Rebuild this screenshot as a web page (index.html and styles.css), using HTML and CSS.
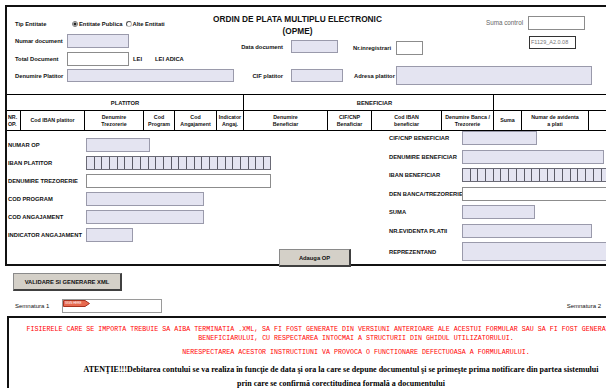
FILE: index.html
```html
<!DOCTYPE html>
<html lang="ro">
<head>
<meta charset="utf-8">
<title>OPME</title>
<link rel="stylesheet" href="styles.css">
</head>
<body>
<div class="page">
  <div class="box main">
    <div class="head">
      <div class="row-a">
        <div class="tip">
          <span class="lbl tip-l">Tip Entitate</span>
          <span class="radio on"></span><span class="lbl">Entitate Publica</span>
          <span class="radio r2"></span><span class="lbl">Alte Entitati</span>
        </div>
        <div class="title">ORDIN DE PLATA MULTIPLU ELECTRONIC<br>(OPME)</div>
        <div class="suma-ctl">
          <span class="lbl lbl-g">Suma control</span>
          <span class="fld white w57"></span>
        </div>
      </div>
      <div class="row-b">
        <div class="col-left">
          <div class="frow"><span class="lbl">Numar document</span><span class="fld w62"></span></div>
          <div class="frow r-total"><span class="lbl">Total Document</span><span class="fld white w62"></span><span class="lbl lei">LEI</span><span class="lbl lei2">LEI ADICA</span></div>
          <div class="frow r-den"><span class="lbl">Denumire Platitor</span><span class="fld h13 w167"></span></div>
        </div>
        <div class="col-mid">
          <div class="frow r-data"><span class="lbl">Data document</span><span class="fld h13 w47"></span></div>
          <div class="frow r-cif"><span class="lbl">CIF platitor</span><span class="fld h13 w52"></span></div>
        </div>
        <div class="col-right">
          <div class="frow r-nr">
            <span class="lbl nr-l">Nr.inregistrari</span><span class="fld white w27 nr-f"></span>
            <span class="ver">F1129_A2.0.08</span>
          </div>
          <div class="frow r-adr"><span class="lbl adr-l">Adresa platitor</span><span class="fld h19 w196"></span></div>
        </div>
      </div>
    </div>

    <div class="thead">
      <div class="tr1">
        <div>PLATITOR</div>
        <div class="ben">BENEFICIAR</div>
        <div></div>
      </div>
      <div class="tr2">
        <div class="nrop">NR.<br>OP.</div>
        <div>Cod IBAN platitor</div>
        <div>Denumire<br>Trezorerie</div>
        <div>Cod<br>Program</div>
        <div>Cod<br>Angajament</div>
        <div>Indicator<br>Angaj.</div>
        <div>Denumire<br>Beneficiar</div>
        <div>CIF/CNP<br>Benaficiar</div>
        <div>Cod IBAN<br>beneficiar</div>
        <div>Denumire Banca /<br>Trezorerie</div>
        <div>Suma</div>
        <div>Numar de avidenta<br>a plati</div>
        <div></div>
      </div>
    </div>

    <div class="entry">
      <div class="ecol-l">
        <div class="frow"><span class="lbl">NUMAR OP</span><span class="fld w64"></span></div>
        <div class="frow"><span class="lbl">IBAN PLATITOR</span><span class="fld seg w185"></span></div>
        <div class="frow"><span class="lbl">DENUMIRE TREZORERIE</span><span class="fld white w185"></span></div>
        <div class="frow"><span class="lbl">COD PROGRAM</span><span class="fld w118"></span></div>
        <div class="frow"><span class="lbl">COD ANGAJAMENT</span><span class="fld w118"></span></div>
        <div class="frow"><span class="lbl">INDICATOR ANGAJAMENT</span><span class="fld w47"></span></div>
      </div>
      <div class="btn btn-add">Adauga OP</div>
      <div class="ecol-r">
        <div class="frow"><span class="lbl">CIF/CNP BENEFICIAR</span><span class="fld w75"></span></div>
        <div class="frow"><span class="lbl">DENUMIRE BENEFICIAR</span><span class="fld w142"></span></div>
        <div class="frow"><span class="lbl">IBAN BENEFICIAR</span><span class="fld seg w200"></span></div>
        <div class="frow"><span class="lbl">DEN BANCA/TREZORERIE</span><span class="fld white w200"></span></div>
        <div class="frow"><span class="lbl">SUMA</span><span class="fld w73"></span></div>
        <div class="frow"><span class="lbl">NR.EVIDENTA PLATII</span><span class="fld w130"></span></div>
        <div class="frow"><span class="lbl">REPREZENTAND</span><span class="fld h19 w200"></span></div>
      </div>
    </div>
  </div>

  <div class="actions">
    <div class="btn btn-val">VALIDARE SI GENERARE XML</div>
  </div>

  <div class="sign">
    <span class="sig-l">Semnatura 1</span>
    <span class="sig-f">
      <span class="tag"><svg width="27" height="7" viewBox="0 0 27 7"><polygon points="0.5,0.5 22,0.5 26.5,3.5 22,6.5 0.5,6.5" fill="#e7694f" stroke="#a8321f" stroke-width="1"/></svg><span class="tag-t">SIGN HERE</span></span>
    </span>
    <span class="sig-l sig2">Semnatura 2</span>
  </div>

  <div class="box notes">
    <p class="red red1">FISIERELE CARE SE IMPORTA TREBUIE SA AIBA TERMINATIA .XML, SA FI FOST GENERATE DIN VERSIUNI ANTERIOARE ALE ACESTUI FORMULAR SAU SA FI FOST GENERATE CU PROGRAMELE ALE<br>BENEFICIARULUI, CU RESPECTAREA INTOCMAI A STRUCTURII DIN GHIDUL UTILIZATORULUI.</p>
    <p class="red red2">NERESPECTAREA ACESTOR INSTRUCTIUNI VA PROVOCA O FUNCTIONARE DEFECTUOASA A FORMULARULUI.</p>
    <p class="warn">ATENŢIE!!!Debitarea contului se va realiza în funcţie de data şi ora la care se depune documentul şi se primeşte prima notificare din partea sistemului<br>prin care se confirmă corectitudinea formală a documentului</p>
  </div>
</div>
</body>
</html>
```

FILE: styles.css
```css
* { box-sizing: border-box; }
html, body { margin: 0; padding: 0; background: #fff; overflow: hidden; }
body { width: 606px; height: 388px; }

.page {
  width: 720px;
  padding: 5px 0 0 5px;
  font-family: "Liberation Sans", Arial, sans-serif;
  color: #111;
}

.lbl {
  font-size: 5.8px;
  font-weight: bold;
  line-height: 8px;
  white-space: nowrap;
  flex: none;
}

.fld {
  display: block;
  flex: none;
  height: 14px;
  background: #e4e4f1;
  border: 1px solid #9a9aab;
}
.fld.white { background: #fff; border-color: #8c8c8c; }
.fld.h13 { height: 13px; }
.fld.h19 { height: 19px; }
.fld.seg {
  background-color: #e4e4f1;
  background-image: repeating-linear-gradient(to right, transparent 0 6.7px, #5a5a66 6.7px 7.7px);
  border-color: #6a6a76;
}

.w27 { width: 27px; } .w47 { width: 47px; } .w52 { width: 52px; } .w57 { width: 57px; }
.w62 { width: 62px; } .w64 { width: 64px; } .w73 { width: 73px; } .w75 { width: 75px; }
.w118 { width: 118px; } .w130 { width: 130px; } .w142 { width: 142px; } .w167 { width: 167px; }
.w185 { width: 185px; } .w196 { width: 196px; } .w200 { width: 200px; }

.box { border: 2px solid #111; }
.main { width: 700px; height: 261px; }

/* header block */
.head { height: 87px; padding-left: 8px; }
.row-a { display: flex; align-items: flex-start; height: 27px; }
.tip { display: flex; align-items: center; width: 185px; height: 8px; margin-top: 13px; }
.tip-l { width: 57px; }
.radio {
  width: 6px; height: 6px; border-radius: 50%;
  border: 1px solid #7a7a7a; background: #fff; flex: none; margin-right: 1px;
}
.radio.on { background: radial-gradient(circle, #222 0 1.3px, #fff 1.8px); }
.radio.r2 { margin-left: 3px; border-color: #555 #bbb #bbb #555; }

.title {
  width: 195px; margin-top: 6px;
  text-align: center; white-space: nowrap;
  font-size: 8.3px; line-height: 12px; font-weight: bold;
}
.suma-ctl { display: flex; align-items: flex-start; margin-left: 91px; }
.lbl-g { font-weight: normal; color: #666; font-size: 6.3px; width: 42px; margin-top: 12px; }
.suma-ctl .fld { margin-top: 9px; }

.row-b { display: flex; height: 60px; }
.frow { display: flex; align-items: center; }
.col-left { width: 224px; display: flex; flex-direction: column; }
.col-left .lbl { width: 52px; }
.r-total { margin-top: 4px; }
.r-den { margin-top: 3px; }
.lei { width: auto; margin-left: 4px; }
.col-left .lei { width: auto; }
.col-left .lei2 { width: auto; margin-left: 13px; }

.col-mid { width: 114px; display: flex; flex-direction: column; }
.col-mid .lbl { width: 52px; text-align: right; padding-right: 8px; }
.r-data { margin-top: 6px; }
.r-cif { margin-top: 16px; }

.col-right { display: flex; flex-direction: column; }
.r-nr { align-items: flex-start; margin-top: 2px; height: 21px; }
.nr-l { width: 43px; margin-top: 8px; }
.nr-f { margin-top: 5px; }
.ver {
  margin-left: 106px; width: 47px; height: 13px;
  border: 1px solid #333; color: #777;
  font-size: 5.5px; line-height: 11px; padding-left: 1px; white-space: nowrap;
}
.r-adr { margin-top: 9px; }
.adr-l { width: 43px; padding-left: 1px; }

/* table header */
.thead { border-top: 1px solid #000; }
.tr1 {
  display: grid; grid-template-columns: 237px 250px 1fr;
  height: 16px; border-bottom: 1px solid #000;
}
.tr1 > div {
  border-right: 1px solid #000;
  display: flex; align-items: center; justify-content: center;
  font-size: 5.8px; font-weight: bold;
}
.tr1 .ben { padding-left: 12px; }
.tr2 {
  display: grid;
  grid-template-columns: 14px 64px 59px 31px 42px 27px 84px 44px 70px 52px 28px 67px 1fr;
  height: 20px; border-bottom: 1px solid #000;
}
.tr2 > div {
  border-right: 1px solid #000;
  display: flex; align-items: center; justify-content: center;
  text-align: center; font-size: 5.3px; line-height: 7px; font-weight: bold;
  white-space: nowrap;
}
.tr2 .nrop { justify-content: flex-start; text-align: left; padding-left: 1px; }

/* entry area */
.entry { display: flex; height: 133px; }
.ecol-l { width: 272px; padding: 7px 0 0 1px; display: flex; flex-direction: column; gap: 4px; }
.ecol-l .lbl { width: 78px; }
.ecol-r { flex: 1; display: flex; flex-direction: column; gap: 4.5px; }
.ecol-r .lbl { width: 73px; }

.btn {
  display: flex; align-items: center; justify-content: center;
  background: #d4d0c8;
  border: 1px solid #8a8a8a; border-right: 2px solid #404040; border-bottom: 2px solid #404040;
  font-size: 5.8px; font-weight: bold; white-space: nowrap; flex: none;
}
.btn-add { width: 72px; height: 18px; align-self: flex-end; margin-bottom: -3px; margin-right: 38px; }

.actions { padding: 7px 0 0 8px; }
.btn-val { width: 109px; height: 18px; }

.sign { display: flex; align-items: center; width: 596px; height: 14px; margin-top: 8px; padding-left: 10px; }
.sig-l { font-size: 6px; width: 47px; white-space: nowrap; }
.sig2 { margin-left: auto; width: auto; }
.sig-f { position: relative; width: 100px; height: 14px; border: 1px solid #9a9a9a; background: #fff; }
.tag { position: absolute; left: 0; top: 0; width: 27px; height: 7px; }
.tag svg { display: block; }
.tag-t { position: absolute; left: 2px; top: 1px; font-size: 3px; line-height: 5px; color: #fff; white-space: nowrap; }

/* notes */
.notes { width: 698px; height: 90px; margin: 3px 0 0 2px; text-align: center; }
.red {
  margin: 0; font-family: "Liberation Mono", "Courier New", monospace;
  font-size: 6.67px; line-height: 9px; color: #f00; white-space: nowrap;
}
.red1 { padding-top: 7px; }
.red2 { margin-top: 5px; }
.warn {
  margin: 6px 30px 0 0;
  font-family: "Liberation Serif", "Times New Roman", serif;
  font-weight: bold; font-size: 8px; line-height: 14px; color: #000; white-space: nowrap;
}
```
